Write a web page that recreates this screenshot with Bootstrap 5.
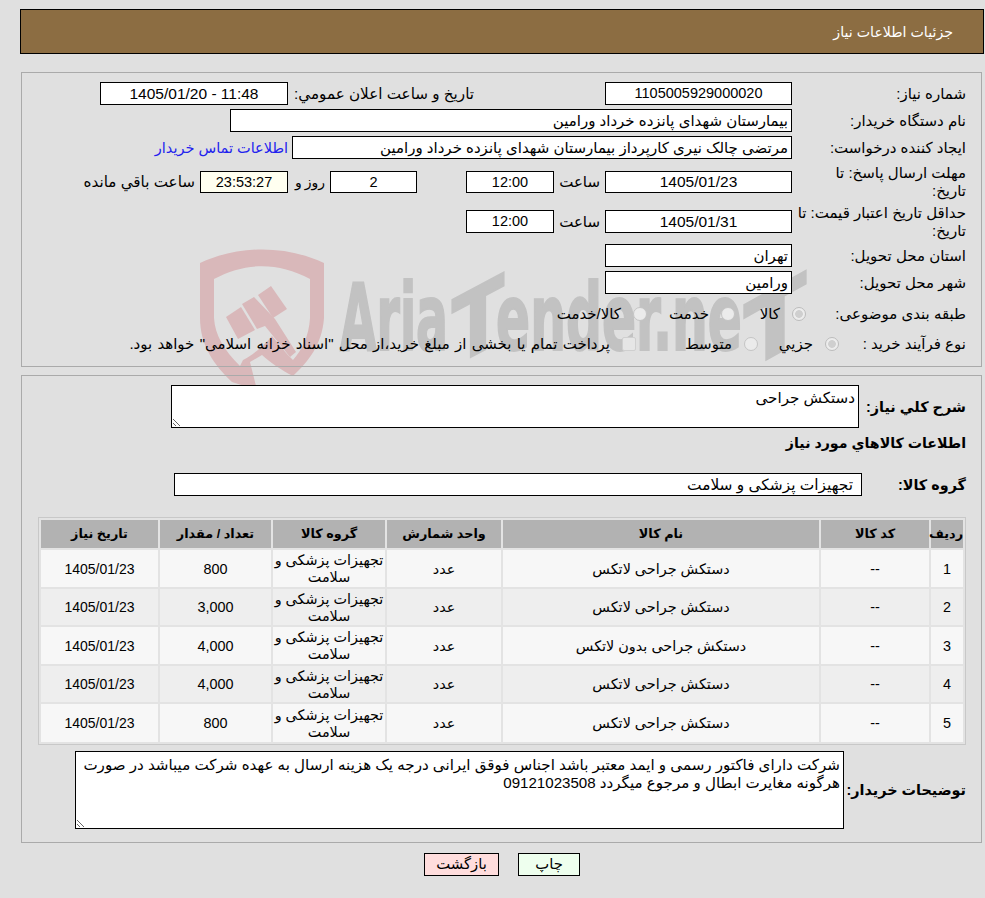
<!DOCTYPE html>
<html lang="fa" dir="rtl">
<head>
<meta charset="utf-8">
<title>جزئیات اطلاعات نیاز</title>
<link href="https://cdn.jsdelivr.net/npm/bootstrap@5.3.0/dist/css/bootstrap.min.css" rel="stylesheet">
<style>
html,body{background:#e0e0e0;}
body{font-family:"Liberation Sans","DejaVu Sans",sans-serif;font-size:15px;line-height:18px;color:#000;height:898px;overflow:hidden;position:relative;}
.wm{position:absolute;left:0;top:0;width:985px;height:420px;z-index:0;}
.page-wrap{position:relative;z-index:1;padding:9px 1px 0 20px;}
.head-bar{height:45px;background:#8c6d42;border:1px solid #000;color:#fff;padding:0 30px;font-size:14.2px;margin-bottom:18px;}
.pane1{margin:0 2px 8px 1px;height:295px;border:1px solid #aaa;padding-top:9px;}
.pane2{margin:0 2px 0 1px;height:468px;border:1px solid #aaa;padding-top:9px;}
.frow{height:23px;margin-bottom:4px;}
.frow.tall{height:37px;}
.frow.tall.s3{margin-bottom:3px;}
.frow.opt{height:27px;margin-bottom:3px;}
.frow.gap6{margin-top:6px;}
.lab{width:189px;flex:none;padding:0 15px 0 0;white-space:nowrap;}
.lab-opt1{width:175px;flex:none;padding-right:15px;white-space:nowrap;}
.lab-opt2{width:142px;flex:none;padding-right:15px;white-space:nowrap;}
.box{border:1px solid #000;background:#fff;height:23px;line-height:21px;padding:0 3px;white-space:nowrap;overflow:hidden;flex:none;}
.box.h22{height:22px;line-height:20px;}
.w187{width:187px;}.w188{width:188px;}.w562{width:562px;}.w500{width:500px;}.w88{width:88px;}.w87{width:87px;}
.ltr{direction:ltr;}
.dt{font-size:15.5px;}
.tm{font-size:14.5px;}
.t181{width:181px;flex:none;margin-right:131px;margin-left:5px;white-space:nowrap;font-size:15.2px;}
.t42{width:42px;flex:none;margin:0 5px 0 4px;white-space:nowrap;}
.m49{margin-right:49px;}
.t37{width:37px;margin-right:5px;flex:none;white-space:nowrap;font-size:14px;word-spacing:-1px;}
.ms5{margin-right:5px;font-size:15.2px;}
.cream{background:#fffff0;}
a.lnk{color:#2222ee;text-decoration:none;margin-right:4px;white-space:nowrap;font-size:14.5px;}
.item{flex:none;}
.i71{width:71px;}.i88{width:88px;}.i81{width:81px;}.i122{width:122px;}
.rd{appearance:none;-webkit-appearance:none;width:14px;height:14px;margin:0 0 0 12px;flex:none;border:1px solid #c4c4c4;border-radius:50%;background:#ebebeb;}
.rd:checked{background:radial-gradient(circle,#cfcfcf 0 3.5px,#ececec 4.2px);border-color:#bcbcbc;}
.rd.sq{border-radius:2px;background:#e6e6e6;border-color:#cfcfcf;}
.wide-txt{word-spacing:1.1px;white-space:nowrap;}
.big{font-weight:700;font-size:14.4px;}
.ta{display:block;border:1px solid #000;background:#fff;color:#000;border-radius:0;font-size:15.1px;outline:0;overflow:hidden;}
.ta-a{width:688px;height:43px;padding:3px 3px 0;line-height:18px;}
.ta-b{width:769px;height:78px;padding:4px 3px 0;line-height:17.5px;}
.lab-b{width:122px;flex:none;padding-right:15px;white-space:nowrap;}
.lab-c{width:119px;flex:none;padding-right:15px;white-space:nowrap;}
.lab-d{width:137px;flex:none;padding-right:15px;white-space:nowrap;}
.sect{height:20px;margin:5px 0 20px;padding-right:15px;font-size:14.2px;}
.grp{width:688px;padding:0 8px;font-size:15.4px;}
.grid-wrap{margin:21px 15px 6px 16px;border:1px solid #c8c8c8;background:#e3e3e3;}
.tbl-x{width:100%;border-collapse:separate;border-spacing:2px;table-layout:fixed;}
.tbl-x th{background:#b2b2b2;height:28px;text-align:center;font-size:12.8px;font-weight:700;padding:0;line-height:16px;}
.tbl-x td{height:37px;text-align:center;padding:1.5px 0 0;vertical-align:middle;line-height:17.3px;font-size:14.4px;}
.tbl-x .d14{font-size:14px;}
.tbl-x tbody tr:nth-child(odd) td{background:#f7f7f7;}
.tbl-x tbody tr:nth-child(even) td{background:#eeeeee;}
.tbl-x tbody tr:nth-child(2) td{height:36px;}
.tbl-x tbody tr:nth-child(4) td{height:36px;}
.tbl-x tbody tr:nth-child(5) td{height:38px;}
.c32{width:32px;}.c108{width:108px;}.c316{width:316px;}.c114{width:114px;}.c112{width:112px;}.c111{width:111px;}
.act-row{gap:19px;margin-top:10px;}
.btn-g,.btn-r{border:1px solid #000;border-radius:0;height:23px;line-height:21px;padding:0;font-size:14.8px;color:#000;}
.btn-g{background:#eeffee;width:62px;}
.btn-r{background:#ffdddd;width:75px;}
</style>
</head>
<body>
<svg class="wm" viewBox="0 0 985 420" aria-hidden="true">
  <g fill="#d9b8ba">
    <path fill-rule="evenodd" d="M200 263 C238 245 286 245 324 263 L324 318 C322 345 308 362 293 376 C281 370 270 362 262 355 L250 362 L257 390 L232 382 C214 365 200 345 200 318 Z M214 279 L214 318 C215 335 224 350 240 366 L243 360 C251 356 263 347 272 336 L287 354 L293 360 C302 350 309 336 310 318 L310 279 C278 262 246 262 214 279 Z"/>
    <path d="M226 317 L241 307 L255 330 L238 339 Z"/>
    <path d="M242 304 L254 297 L275 319 L296 352 L290 357 L265 326 L257 329 Z"/>
    <path d="M258 295 L271 286 L287 309 L273 318 Z"/>
  </g>
  <g fill="#c2c2c2" stroke="#c2c2c2" stroke-width="2" font-family="'DejaVu Sans Condensed','DejaVu Sans',sans-serif" font-weight="700" font-size="92" style="direction:ltr;unicode-bidi:bidi-override">
    <text x="340" y="350" textLength="108" lengthAdjust="spacingAndGlyphs" direction="ltr">Aria</text>
    <text x="0" y="0" textLength="52" lengthAdjust="spacingAndGlyphs" direction="ltr" transform="translate(452 367) skewY(-28)">T</text>
    <text x="496" y="350" textLength="246" lengthAdjust="spacingAndGlyphs" direction="ltr">ender.ne</text>
    <text x="0" y="0" textLength="62" lengthAdjust="spacingAndGlyphs" direction="ltr" transform="translate(744 372) skewY(-29)">T</text>
  </g>
</svg>
<div class="page-wrap">
  <div class="head-bar d-flex align-items-center">جزئیات اطلاعات نیاز</div>

  <div class="pane1">
    <div class="frow d-flex align-items-center">
      <div class="lab">شماره نیاز:</div>
      <div class="box w187 text-center tm">1105005929000020</div>
      <div class="t181">تاریخ و ساعت اعلان عمومي:</div>
      <div class="box w188 text-center ltr dt">1405/01/20 - 11:48</div>
    </div>
    <div class="frow d-flex align-items-center">
      <div class="lab">نام دستگاه خریدار:</div>
      <div class="box w562">بیمارستان شهدای پانزده خرداد ورامین</div>
    </div>
    <div class="frow d-flex align-items-center">
      <div class="lab">ایجاد کننده درخواست:</div>
      <div class="box w500">مرتضی چالک نیری کارپرداز بیمارستان شهدای پانزده خرداد ورامین</div>
      <a class="lnk" href="#">اطلاعات تماس خریدار</a>
    </div>
    <div class="frow tall s3 d-flex align-items-center">
      <div class="lab">مهلت ارسال پاسخ: تا<br>تاریخ:</div>
      <div class="box h22 w187 text-center dt">1405/01/23</div>
      <div class="t42">ساعت</div>
      <div class="box h22 w88 text-center tm">12:00</div>
      <div class="box h22 w87 text-center m49 tm">2</div>
      <div class="t37">روز و</div>
      <div class="box h22 w88 text-center cream tm">23:53:27</div>
      <div class="ms5 text-nowrap">ساعت باقي مانده</div>
    </div>
    <div class="frow tall d-flex align-items-center">
      <div class="lab">حداقل تاریخ اعتبار قیمت: تا<br>تاریخ:</div>
      <div class="box w187 text-center dt">1405/01/31</div>
      <div class="t42">ساعت</div>
      <div class="box w88 text-center tm">12:00</div>
    </div>
    <div class="frow d-flex align-items-center">
      <div class="lab">استان محل تحویل:</div>
      <div class="box w187">تهران</div>
    </div>
    <div class="frow d-flex align-items-center">
      <div class="lab">شهر محل تحویل:</div>
      <div class="box w187">ورامین</div>
    </div>
    <div class="frow opt gap6 d-flex align-items-center">
      <div class="lab-opt1">طبقه بندی موضوعی:</div>
      <div class="item i71 d-flex align-items-center"><input class="rd" type="radio" name="a" checked disabled><span>کالا</span></div>
      <div class="item i88 d-flex align-items-center"><input class="rd" type="radio" name="a" disabled><span>خدمت</span></div>
      <div class="item d-flex align-items-center"><input class="rd" type="radio" name="a" disabled><span>کالا/خدمت</span></div>
    </div>
    <div class="frow opt d-flex align-items-center">
      <div class="lab-opt2">نوع فرآیند خرید :</div>
      <div class="item i81 d-flex align-items-center"><input class="rd" type="radio" name="b" checked disabled><span>جزیي</span></div>
      <div class="item i122 d-flex align-items-center"><input class="rd" type="radio" name="b" disabled><span>متوسط</span></div>
      <div class="item d-flex align-items-center"><input class="rd sq" type="checkbox" disabled><span class="wide-txt">پرداخت تمام یا بخشی از مبلغ خرید،از محل "اسناد خزانه اسلامی" خواهد بود.</span></div>
    </div>
  </div>

  <div class="pane2">
    <div class="d-flex align-items-center">
      <div class="lab-b big">شرح کلي نیاز:</div>
      <textarea class="ta ta-a" readonly>دستکش جراحی</textarea>
    </div>
    <div class="sect big d-flex align-items-center">اطلاعات کالاهاي مورد نیاز</div>
    <div class="d-flex align-items-center">
      <div class="lab-c big">گروه کالا:</div>
      <div class="box grp">تجهیزات پزشکی و سلامت</div>
    </div>
    <div class="grid-wrap">
      <table class="tbl-x">
        <thead><tr><th class="c32">ردیف</th><th class="c108">کد کالا</th><th class="c316">نام کالا</th><th class="c114">واحد شمارش</th><th class="c112">گروه کالا</th><th class="c111">تعداد / مقدار</th><th>تاریخ نیاز</th></tr></thead>
        <tbody>
          <tr><td>1</td><td>--</td><td>دستکش جراحی لاتکس</td><td>عدد</td><td>تجهیزات پزشکی و سلامت</td><td>800</td><td class="d14">1405/01/23</td></tr>
          <tr><td>2</td><td>--</td><td>دستکش جراحی لاتکس</td><td>عدد</td><td>تجهیزات پزشکی و سلامت</td><td>3,000</td><td class="d14">1405/01/23</td></tr>
          <tr><td>3</td><td>--</td><td>دستکش جراحی بدون لاتکس</td><td>عدد</td><td>تجهیزات پزشکی و سلامت</td><td>4,000</td><td class="d14">1405/01/23</td></tr>
          <tr><td>4</td><td>--</td><td>دستکش جراحی لاتکس</td><td>عدد</td><td>تجهیزات پزشکی و سلامت</td><td>4,000</td><td class="d14">1405/01/23</td></tr>
          <tr><td>5</td><td>--</td><td>دستکش جراحی لاتکس</td><td>عدد</td><td>تجهیزات پزشکی و سلامت</td><td>800</td><td class="d14">1405/01/23</td></tr>
        </tbody>
      </table>
    </div>
    <div class="d-flex align-items-center">
      <div class="lab-d big">توضیحات خریدار:</div>
      <textarea class="ta ta-b" readonly>شرکت دارای فاکتور رسمی و ایمد معتبر باشد اجناس فوقق ایرانی درجه یک هزینه ارسال به عهده شرکت میباشد در صورت هرگونه مغایرت ابطال و مرجوع میگردد 09121023508</textarea>
    </div>
  </div>

  <div class="act-row d-flex justify-content-center">
    <button type="button" class="btn btn-g">چاپ</button>
    <button type="button" class="btn btn-r">بازگشت</button>
  </div>
</div>
</body>
</html>
